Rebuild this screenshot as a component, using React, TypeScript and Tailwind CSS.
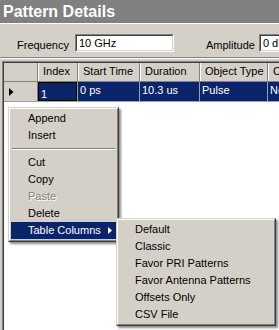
import React from 'react';

const columns = [
  { title: 'Index', width: 'w-[40px]' },
  { title: 'Start Time', width: 'w-[62px]' },
  { title: 'Duration', width: 'w-[60px]' },
  { title: 'Object Type', width: 'w-[68px]' },
  { title: 'Comment', width: 'w-[60px]' },
];

const rowValues = ['1', '0 ps', '10.3 us', 'Pulse', 'None'];

const menuItems = ['Append', 'Insert', '-', 'Cut', 'Copy', 'Paste', 'Delete'];
const subItems = ['Default', 'Classic', 'Favor PRI Patterns', 'Favor Antenna Patterns', 'Offsets Only', 'CSV File'];

// classic sunken text box
const TextBox: React.FC<{ value: string; className?: string }> = ({ value, className }) => (
  <div className={`h-[18px] shrink-0 border-t border-l border-[#808080] border-b border-r border-b-white border-r-white ${className ?? ''}`}>
    <div className="h-full border-t border-l border-[#404040] border-b border-r border-b-[#d4d0c8] border-r-[#d4d0c8] bg-white pl-[2px] text-[11px] leading-[14px] text-black whitespace-nowrap overflow-hidden">
      {value}
    </div>
  </div>
);

// raised popup frame used by both menus
const MenuFrame: React.FC<{ className: string; children: React.ReactNode }> = ({ className, children }) => (
  <div
    className={`absolute border-t border-l border-[#d4d0c8] border-b border-r border-b-[#404040] border-r-[#404040] shadow-[2px_2px_2px_rgba(0,0,0,0.45)] ${className}`}
  >
    <div className="border-t border-l border-white border-b border-r border-b-[#808080] border-r-[#808080] bg-[#d4d0c8] p-[1px]">
      {children}
    </div>
  </div>
);

export default function App() {
  return (
    <div className="relative w-[279px] h-[330px] overflow-hidden bg-[#d4d0c8] font-['Liberation_Sans',Arial,sans-serif] text-black">
      {/* Title */}
      <div className="h-[23px] bg-[#808080] pl-[3px] text-[16px] font-bold leading-[23px] text-white">Pattern Details</div>
      <div className="h-[1px] bg-white" />

      {/* Frequency / Amplitude row */}
      <div className="flex h-[33px] items-start overflow-hidden pt-[10px] text-[11px]">
        <span className="ml-[17px] mt-[4px] shrink-0 leading-[14px]">Frequency</span>
        <TextBox value="10 GHz" className="ml-[6px] w-[99px]" />
        <span className="ml-[32px] mt-[4px] shrink-0 leading-[14px]">Amplitude</span>
        <TextBox value="0 dBm" className="ml-[4px] w-[60px]" />
      </div>
      <div className="h-[1px] bg-[#808080]" />
      <div className="h-[1px] bg-white" />
      <div className="h-[2px]" />

      {/* Grid */}
      <div className="ml-[2px] h-[280px] border-t border-l border-[#808080]">
        <div className="h-full overflow-hidden border-t border-l border-[#404040] bg-white text-[11px]">
          {/* header row */}
          <div className="flex h-[19px] bg-[#d4d0c8] border-b border-[#808080]">
            <div className="w-[34px] shrink-0 border-r border-[#808080]" />
            {columns.map(c => (
              <div key={c.title} className={`${c.width} shrink-0 border-l border-white border-r border-r-[#808080] pl-[4px] leading-[17px] whitespace-nowrap overflow-hidden`}>
                {c.title}
              </div>
            ))}
          </div>
          {/* selected data row */}
          <div className="flex h-[20px] border-b border-[#a0a0a0]">
            <div className="w-[34px] shrink-0 bg-[#d4d0c8] border-r border-[#808080] flex items-center pl-[5px]">
              <svg width="5" height="8" viewBox="0 0 5 8">
                <path d="M0 0 L4.5 4 L0 8 Z" fill="#000" />
              </svg>
            </div>
            {columns.map((c, i) => (
              <div key={c.title} className={`${c.width} shrink-0 bg-[#0a246a] border-r border-[#a0a0a0] text-white whitespace-nowrap overflow-hidden`}>
                {i === 0 ? (
                  <div className="h-full border border-black pl-[2px] pt-[4px] leading-[14px]">{rowValues[i]}</div>
                ) : (
                  <div className="pl-[2px] pt-[1px] leading-[14px]">{rowValues[i]}</div>
                )}
              </div>
            ))}
          </div>
        </div>
      </div>

      {/* Context menu */}
      <MenuFrame className="left-[8px] top-[107px] w-[111px]">
        <div className="text-[11px]">
          {menuItems.map((item, i) =>
            item === '-' ? (
              <div key={i} className="py-[4px] px-[1px]">
                <div className="h-[1px] bg-[#808080]" />
                <div className="h-[1px] bg-white" />
              </div>
            ) : (
              <div
                key={item}
                className={`h-[17px] pl-[17px] leading-[17px] ${item === 'Paste' ? 'text-[#808080] [text-shadow:1px_1px_0_#fff]' : ''}`}
              >
                {item}
              </div>
            )
          )}
          <div className="flex h-[17px] items-center justify-between bg-[#0a246a] pl-[17px] pr-[4px] leading-[17px] text-white">
            <span>Table Columns</span>
            <svg width="4" height="7" viewBox="0 0 4 7">
              <path d="M0 0 L4 3.5 L0 7 Z" fill="#fff" />
            </svg>
          </div>
        </div>
      </MenuFrame>

      {/* Table Columns submenu */}
      <MenuFrame className="left-[116px] top-[218px] w-[160px]">
        <div className="text-[11px]">
          {subItems.map(item => (
            <div key={item} className="h-[17px] pl-[16px] leading-[17px] whitespace-nowrap">
              {item}
            </div>
          ))}
        </div>
      </MenuFrame>
    </div>
  );
}
